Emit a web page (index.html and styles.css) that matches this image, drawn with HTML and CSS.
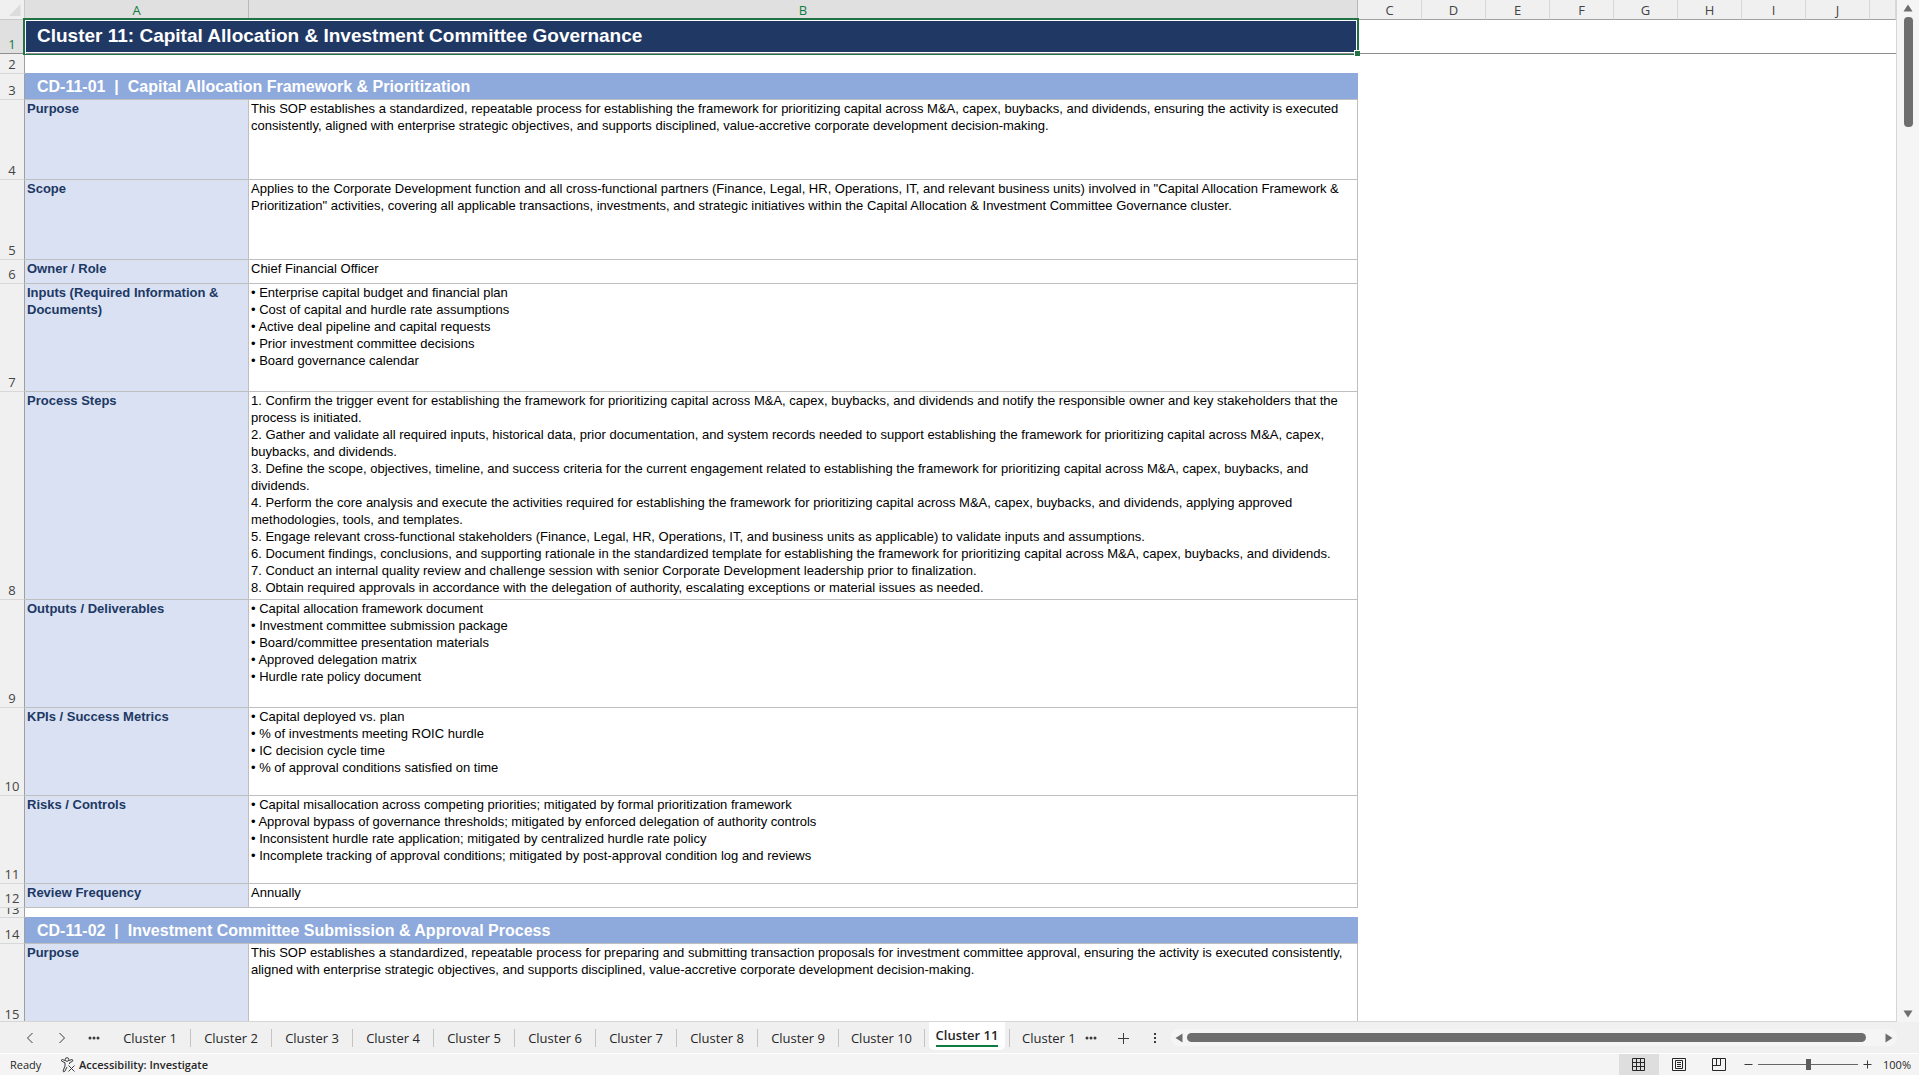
FILE: index.html
```html
<!DOCTYPE html>
<html lang="en">
<head>
<meta charset="utf-8">
<title>Cluster 11</title>
<link rel="stylesheet" href="styles.css">
</head>
<body>
<div class="app">
  <main class="workspace">
    <div class="grid-pane">
      <table class="sheet">
        <colgroup><col class="c-num"><col class="c-a"><col class="c-b"><col class="c-std"><col class="c-std"><col class="c-std"><col class="c-std"><col class="c-std"><col class="c-std"><col class="c-std"><col class="c-std"><col></colgroup>
        <thead>
          <tr class="cols"><th class="corner"><svg width="24" height="19" viewBox="0 0 24 19"><path d="M20.500 4V16H9z" fill="#dcdcdc"/></svg></th><th class="sel">A</th><th class="sel">B</th><th>C</th><th>D</th><th>E</th><th>F</th><th>G</th><th>H</th><th>I</th><th>J</th><th></th></tr>
        </thead>
        <tbody>
          <tr class="h34 frozen"><th class="sel">1</th><td colspan="2" class="title">Cluster 11: Capital Allocation &amp; Investment Committee Governance<span class="handle"></span></td><td colspan="9"></td></tr>
          <tr class="h20"><th>2</th><td colspan="11"></td></tr>
          <tr class="h26"><th>3</th><td colspan="2" class="band">CD-11-01&nbsp; |&nbsp; Capital Allocation Framework &amp; Prioritization</td><td colspan="9"></td></tr>
          <tr class="h80"><th>4</th><td class="label">Purpose</td><td class="text">This SOP establishes a standardized, repeatable process for establishing the framework for prioritizing capital across M&amp;A, capex, buybacks, and dividends, ensuring the activity is executed<br>consistently, aligned with enterprise strategic objectives, and supports disciplined, value-accretive corporate development decision-making.</td><td colspan="9"></td></tr>
          <tr class="h80"><th>5</th><td class="label">Scope</td><td class="text">Applies to the Corporate Development function and all cross-functional partners (Finance, Legal, HR, Operations, IT, and relevant business units) involved in "Capital Allocation Framework &amp;<br>Prioritization" activities, covering all applicable transactions, investments, and strategic initiatives within the Capital Allocation &amp; Investment Committee Governance cluster.</td><td colspan="9"></td></tr>
          <tr class="h24"><th>6</th><td class="label">Owner / Role</td><td class="text">Chief Financial Officer</td><td colspan="9"></td></tr>
          <tr class="h108"><th>7</th><td class="label">Inputs (Required Information &amp;<br>Documents)</td><td class="text">• Enterprise capital budget and financial plan<br>• Cost of capital and hurdle rate assumptions<br>• Active deal pipeline and capital requests<br>• Prior investment committee decisions<br>• Board governance calendar</td><td colspan="9"></td></tr>
          <tr class="h208"><th>8</th><td class="label">Process Steps</td><td class="text">1. Confirm the trigger event for establishing the framework for prioritizing capital across M&amp;A, capex, buybacks, and dividends and notify the responsible owner and key stakeholders that the<br>process is initiated.<br>2. Gather and validate all required inputs, historical data, prior documentation, and system records needed to support establishing the framework for prioritizing capital across M&amp;A, capex,<br>buybacks, and dividends.<br>3. Define the scope, objectives, timeline, and success criteria for the current engagement related to establishing the framework for prioritizing capital across M&amp;A, capex, buybacks, and<br>dividends.<br>4. Perform the core analysis and execute the activities required for establishing the framework for prioritizing capital across M&amp;A, capex, buybacks, and dividends, applying approved<br>methodologies, tools, and templates.<br>5. Engage relevant cross-functional stakeholders (Finance, Legal, HR, Operations, IT, and business units as applicable) to validate inputs and assumptions.<br>6. Document findings, conclusions, and supporting rationale in the standardized template for establishing the framework for prioritizing capital across M&amp;A, capex, buybacks, and dividends.<br>7. Conduct an internal quality review and challenge session with senior Corporate Development leadership prior to finalization.<br>8. Obtain required approvals in accordance with the delegation of authority, escalating exceptions or material issues as needed.</td><td colspan="9"></td></tr>
          <tr class="h108"><th>9</th><td class="label">Outputs / Deliverables</td><td class="text">• Capital allocation framework document<br>• Investment committee submission package<br>• Board/committee presentation materials<br>• Approved delegation matrix<br>• Hurdle rate policy document</td><td colspan="9"></td></tr>
          <tr class="h88"><th>10</th><td class="label">KPIs / Success Metrics</td><td class="text">• Capital deployed vs. plan<br>• % of investments meeting ROIC hurdle<br>• IC decision cycle time<br>• % of approval conditions satisfied on time</td><td colspan="9"></td></tr>
          <tr class="h88"><th>11</th><td class="label">Risks / Controls</td><td class="text">• Capital misallocation across competing priorities; mitigated by formal prioritization framework<br>• Approval bypass of governance thresholds; mitigated by enforced delegation of authority controls<br>• Inconsistent hurdle rate application; mitigated by centralized hurdle rate policy<br>• Incomplete tracking of approval conditions; mitigated by post-approval condition log and reviews</td><td colspan="9"></td></tr>
          <tr class="h24"><th>12</th><td class="label">Review Frequency</td><td class="text">Annually</td><td colspan="9"></td></tr>
          <tr class="h10"><th><div class="clip">13</div></th><td colspan="11"></td></tr>
          <tr class="h26"><th>14</th><td colspan="2" class="band">CD-11-02&nbsp; |&nbsp; Investment Committee Submission &amp; Approval Process</td><td colspan="9"></td></tr>
          <tr class="h80"><th>15</th><td class="label">Purpose</td><td class="text">This SOP establishes a standardized, repeatable process for preparing and submitting transaction proposals for investment committee approval, ensuring the activity is executed consistently,<br>aligned with enterprise strategic objectives, and supports disciplined, value-accretive corporate development decision-making.</td><td colspan="9"></td></tr>
        </tbody>
      </table>
    </div>
    <div class="vscroll">
      <button class="arrow" aria-label="Scroll up"><svg width="10" height="8" viewBox="0 0 10 8"><path d="M5 0.500 9.500 7.500H0.500z"/></svg></button>
      <div class="vthumb"></div>
      <button class="arrow" aria-label="Scroll down"><svg width="10" height="8" viewBox="0 0 10 8"><path d="M0.500 0.500H9.500L5 7.500z"/></svg></button>
    </div>
  </main>
  <nav class="tabbar">
    <div class="tabnav">
      <button aria-label="Previous sheet"><svg width="12" height="12" viewBox="0 0 12 12"><path d="M8.500 1 3.500 6 8.500 11"/></svg></button>
      <button aria-label="Next sheet"><svg width="12" height="12" viewBox="0 0 12 12"><path d="M3.500 1 8.500 6 3.500 11"/></svg></button>
      <button aria-label="More sheets"><svg class="dots" width="12" height="4" viewBox="0 0 12 4"><circle cx="2" cy="2" r="1.500"/><circle cx="6" cy="2" r="1.500"/><circle cx="10" cy="2" r="1.500"/></svg></button>
    </div>
    <div class="tabs">
      <button class="tab">Cluster 1</button><button class="tab">Cluster 2</button><button class="tab">Cluster 3</button><button class="tab">Cluster 4</button><button class="tab">Cluster 5</button><button class="tab">Cluster 6</button><button class="tab">Cluster 7</button><button class="tab">Cluster 8</button><button class="tab">Cluster 9</button><button class="tab wide">Cluster 10</button><button class="tab active"><span>Cluster 11</span></button><button class="tab last">Cluster 1</button>
    </div>
    <div class="tabtools">
      <button aria-label="All sheets"><svg class="dots" width="12" height="4" viewBox="0 0 12 4"><circle cx="2" cy="2" r="1.500"/><circle cx="6" cy="2" r="1.500"/><circle cx="10" cy="2" r="1.500"/></svg></button>
      <button aria-label="New sheet"><svg width="12" height="12" viewBox="0 0 12 12"><path d="M6.500 1V12M1 6.500H12"/></svg></button>
      <button aria-label="Resize"><svg class="dots" width="4" height="12" viewBox="0 0 4 12"><path d="M1 1h2v2H1zM1 5h2v2H1zM1 9h2v2H1z"/></svg></button>
    </div>
    <div class="hscroll">
      <button class="arrow" aria-label="Scroll left"><svg width="8" height="10" viewBox="0 0 8 10"><path d="M7.500 0.500V9.500L0.500 5z"/></svg></button>
      <div class="hthumb"></div>
      <button class="arrow" aria-label="Scroll right"><svg width="8" height="10" viewBox="0 0 8 10"><path d="M0.500 0.500V9.500L7.500 5z"/></svg></button>
    </div>
  </nav>
  <footer class="status">
    <span class="ready">Ready</span>
    <button class="access"><svg width="16" height="16" viewBox="0 0 16 16"><circle cx="7" cy="2.500" r="1.800"/><path d="M5 3.500 2.500 2.500Q1 2.500 1.500 4L5 5.800V9L3 14Q3.500 15.500 4.700 14.500L7 10M9 3.500 12 2.500Q13.500 3 12.500 4.300L9.500 5.800V7M8.500 8.500 14.500 14.500M14.500 8.500 8.500 14.500"/></svg>Accessibility: Investigate</button>
    <div class="views">
      <button class="view on" aria-label="Normal"><svg width="14" height="14" viewBox="0 0 14 14"><path d="M.5.5h12v12h-12zM.5 4.500h12M.5 8.500h12M4.500.5v12M8.500.5v12"/></svg></button>
      <button class="view" aria-label="Page layout"><svg width="14" height="14" viewBox="0 0 14 14"><path d="M.5.5h13v12h-13zM3.500 2.500h7v8h-7zM5 4.500h4M5 6.500h4M5 8.500h4"/></svg></button>
      <button class="view" aria-label="Page break preview"><svg width="14" height="14" viewBox="0 0 14 14"><path d="M.5.5h13v12h-13zM4.500.5v7M8.500.5v7M.5 7.500h8"/></svg></button>
    </div>
    <div class="zoom">
      <button aria-label="Zoom out"><svg width="9" height="9" viewBox="0 0 9 9"><path d="M0.500 4.500h8"/></svg></button>
      <input type="range" min="0" max="100" value="50" aria-label="Zoom">
      <button aria-label="Zoom in"><svg width="9" height="9" viewBox="0 0 9 9"><path d="M0.500 4.500h8M4.500 .5v8"/></svg></button>
    </div>
    <span class="pct">100%</span>
  </footer>
</div>
</body>
</html>
```
FILE: styles.css
```css
* { box-sizing: border-box; }
body { margin: 0; background: #f0f0f0; font-family: "Open Sans", "Noto Sans", sans-serif; color: #262626; }
button { border: 0; padding: 0; margin: 0; background: none; font: inherit; color: inherit; display: flex; align-items: center; justify-content: center; }
svg { display: block; fill: none; stroke: #3b3b3b; }

.app { height: 100vh; display: flex; flex-direction: column; overflow: hidden; }
.workspace { flex: 1; min-height: 0; display: flex; }
.grid-pane { flex: 1; min-width: 0; overflow: hidden; background: #fff; border-right: 1px solid #d6d6d6; border-bottom: 1px solid #d6d6d6; }

.sheet { width: 100%; table-layout: fixed; border-collapse: separate; border-spacing: 0; }
.c-num { width: 25px; }
.c-a { width: 224px; }
.c-b { width: 1109px; }
.c-std { width: 64px; }
.sheet th, .sheet td { padding: 0; vertical-align: top; text-align: left; }
.sheet th { padding-bottom: 1px; background: #f0f0f0; color: #444; font-size: 13px; line-height: 16px; font-weight: 400; text-align: center; vertical-align: bottom; border-right: 1px solid #9f9f9f; border-bottom: 1px solid #d8d8d8; }
.sheet .cols th { height: 20px; border-right-color: #d8d8d8; border-bottom-color: #a0a0a0; }
.sheet .cols .corner { padding: 0; border-bottom-color: #c8c8c8; border-right-color: #c8c8c8; }
.corner svg { stroke: none; }
.sheet .sel { background: #e0e0e0; color: #107c41; }
.sheet .cols .sel { border-right-color: #b8b8b8; }

.h10 { height: 10px; }
.h20 { height: 20px; }
.h24 { height: 24px; }
.h26 { height: 26px; }
.h34 { height: 34px; }
.h80 { height: 80px; }
.h88 { height: 88px; }
.h108 { height: 108px; }
.h208 { height: 208px; }

.sheet .frozen th, .sheet .frozen td { border-bottom: 1px solid #8f8f8f; }
.sheet .h10 th { padding: 0; }
.clip { height: 9px; display: flex; align-items: flex-end; justify-content: center; overflow: hidden; }
.sheet td { font-family: "Liberation Sans", Arial, sans-serif; }
.sheet .title { position: relative; padding: 0 12px; background: #203864; color: #fff; font-size: 19px; line-height: 32px; font-weight: 700; vertical-align: top; box-shadow: inset 0 -1px 0 #fff; }
/* selection frame around the merged title cell */
.title::after { content: ""; position: absolute; z-index: 2; top: -2px; left: -2px; right: -1px; bottom: -2px; border: 2px solid #217346; border-bottom-width: 1px; box-shadow: inset 1px 1px 0 #fff, inset -1px 0 0 #fff; }
.handle { position: absolute; z-index: 3; right: -2px; bottom: -3px; width: 6px; height: 6px; background: #217346; border: solid #fff; border-width: 1px 0 0 1px; }
.sheet .band { padding: 0 12px; background: #8ea9db; color: #fff; font-size: 16px; line-height: 25px; font-weight: 700; vertical-align: middle; border-bottom: 1px solid #bfbfbf; box-shadow: 0 -1px 0 #8ea9db; }
.sheet .label, .sheet .text { padding: 0 2px; font-size: 13px; line-height: 17px; white-space: nowrap; border-right: 1px solid #bfbfbf; border-bottom: 1px solid #bfbfbf; }
.sheet .label { background: #d9e1f2; color: #203864; font-weight: 700; }
.sheet .text { color: #000; }

.arrow svg { fill: #6e6e6e; stroke: none; }
.vscroll { width: 22px; display: flex; flex-direction: column; align-items: center; padding: 4px 0; background: #f5f5f5; }
.vthumb { width: 9px; height: 110px; margin: 5px 0 auto; border-radius: 4px; background: #6e6e6e; }

.tabbar { height: 31px; display: flex; align-items: center; font-size: 13px; }
.tabnav { display: flex; align-items: center; padding-left: 14px; }
.tabnav button { width: 32px; height: 28px; }
.dots { fill: #3b3b3b; stroke: none; }
.tabs { display: flex; align-items: center; height: 31px; }
.tab { width: 81px; height: 18px; border-right: 1px solid #c4c4c4; white-space: nowrap; }
.tab.wide { width: 86px; }
.tab.active { width: 76px; height: 28px; margin: 0 4px; align-self: flex-start; background: #fff; border: 0; border-radius: 0 0 5px 5px; font-weight: 600; }
.active span { line-height: 20px; border-bottom: 2px solid #107c41; }
.tab.last { width: 66px; padding-left: 12px; justify-content: flex-start; border-right: 0; border-left: 1px solid #c4c4c4; }
.tabtools { display: flex; }
.tabtools button { width: 32px; height: 28px; }
.hscroll { flex: 1; height: 17px; margin-right: 22px; padding: 0 4px; display: flex; align-items: center; gap: 4px; border-radius: 8px; background: #f5f5f5; }
.hthumb { flex: 1; height: 9px; margin-right: 15px; border-radius: 5px; background: #6e6e6e; }

.status { height: 22px; display: flex; align-items: center; border-top: 1px solid #fff; background: #f4f4f4; font-size: 11px; }
.ready { padding-left: 10px; width: 60px; }
.access { gap: 3px; font-weight: 600; }
.views { display: flex; margin-left: auto; }
.view { width: 40px; height: 21px; }
.view svg { stroke: #262626; }
.view.on { background: #dedede; }
.zoom { display: flex; align-items: center; gap: 5px; margin-left: 5px; }
.zoom input { appearance: none; width: 100px; height: 12px; margin: 0; background: linear-gradient(#666, #666) center / 100% 1px no-repeat; }
.zoom input::-webkit-slider-thumb { appearance: none; width: 5px; height: 11px; background: #5c5c5c; }
.pct { width: 47px; padding-right: 8px; text-align: right; }
```
